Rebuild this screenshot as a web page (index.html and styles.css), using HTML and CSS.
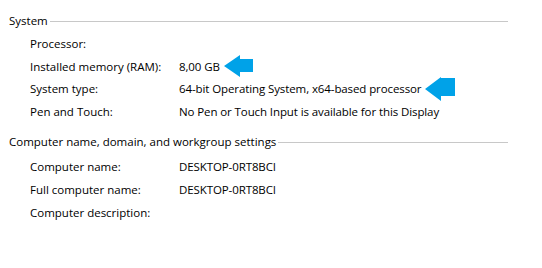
FILE: index.html
```html
<!DOCTYPE html>
<html>
<head>
<meta charset="utf-8">
<link rel="stylesheet" href="styles.css">
</head>
<body>
<div class="page">
  <section class="group">
    <div class="head"><span class="title">System</span><span class="rule"></span></div>
    <div class="rows">
      <div class="row"><span class="label">Processor:</span><span class="value"></span></div>
      <div class="row"><span class="label">Installed memory (RAM):</span><span class="value">8,00 GB</span><svg class="arrow a1" width="30" height="22" viewBox="0 0 30 22"><path d="M0 11 L16 0 L16 4 L29 4 L29 17 L16 17 L16 22 Z" fill="#00a2e8"/></svg></div>
      <div class="row"><span class="label">System type:</span><span class="value">64-bit Operating System, x64-based processor</span><svg class="arrow a2" width="31" height="24" viewBox="0 0 31 24"><path d="M0 12 L16 0 L16 1 L30 1 L30 19 L16 19 L16 24 Z" fill="#00a2e8"/></svg></div>
      <div class="row"><span class="label">Pen and Touch:</span><span class="value">No Pen or Touch Input is available for this Display</span></div>
    </div>
  </section>
  <section class="group">
    <div class="head"><span class="title">Computer name, domain, and workgroup settings</span><span class="rule"></span></div>
    <div class="rows">
      <div class="row"><span class="label">Computer name:</span><span class="value">DESKTOP-0RT8BCI</span></div>
      <div class="row"><span class="label">Full computer name:</span><span class="value">DESKTOP-0RT8BCI</span></div>
      <div class="row"><span class="label">Computer description:</span><span class="value"></span></div>
    </div>
  </section>
</div>
</body>
</html>
```
FILE: styles.css
```css
html, body { margin: 0; padding: 0; background: #fff; }
body {
  font-family: "Open Sans", "Noto Sans", sans-serif;
  font-size: 11.5px;
  color: #000;
}
.page { width: 499px; padding: 11px 0 0 9px; }
.group { margin-bottom: 9.5px; }
.head { display: flex; align-items: center; height: 18px; }
.title { white-space: nowrap; }
.rule { flex: 1; height: 1px; background: #c8c8c8; margin-left: 2px; margin-top: 2px; }
.rows { padding: 3.5px 0 0 21px; }
.row { display: flex; align-items: center; height: 22.6px; }
.group + .group .rows { padding-top: 4.5px; }
.group + .group .row { height: 23px; }
.label { width: 149px; flex: none; }
.value { white-space: nowrap; letter-spacing: -0.1px; }
.arrow { display: block; margin-left: 4px; }
```
